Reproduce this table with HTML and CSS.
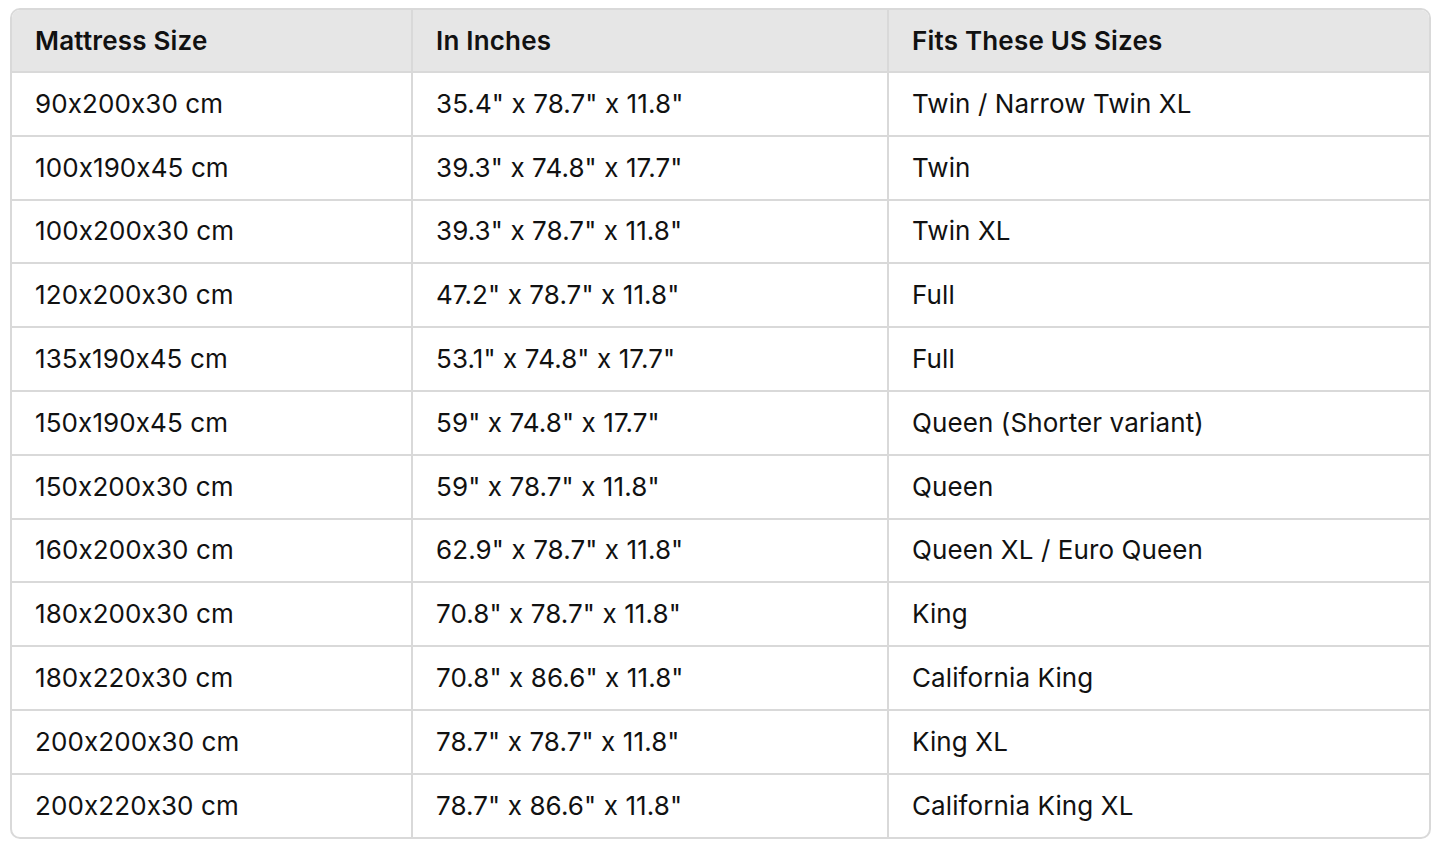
FILE: index.html
```html
<!DOCTYPE html>
<html>
<head>
<meta charset="utf-8">
<link rel="stylesheet" href="styles.css">
</head>
<body>
<div class="wrap">
<table class="sizes">
<colgroup><col class="c1"><col class="c2"><col class="c3"></colgroup>
<thead>
<tr><th>Mattress Size</th><th>In Inches</th><th>Fits These US Sizes</th></tr>
</thead>
<tbody>
<tr><td>90x200x30 cm</td><td>35.4" x 78.7" x 11.8"</td><td>Twin / Narrow Twin XL</td></tr>
<tr><td>100x190x45 cm</td><td>39.3" x 74.8" x 17.7"</td><td>Twin</td></tr>
<tr><td>100x200x30 cm</td><td>39.3" x 78.7" x 11.8"</td><td>Twin XL</td></tr>
<tr><td>120x200x30 cm</td><td>47.2" x 78.7" x 11.8"</td><td>Full</td></tr>
<tr><td>135x190x45 cm</td><td>53.1" x 74.8" x 17.7"</td><td>Full</td></tr>
<tr><td>150x190x45 cm</td><td>59" x 74.8" x 17.7"</td><td>Queen (Shorter variant)</td></tr>
<tr><td>150x200x30 cm</td><td>59" x 78.7" x 11.8"</td><td>Queen</td></tr>
<tr><td>160x200x30 cm</td><td>62.9" x 78.7" x 11.8"</td><td>Queen XL / Euro Queen</td></tr>
<tr><td>180x200x30 cm</td><td>70.8" x 78.7" x 11.8"</td><td>King</td></tr>
<tr><td>180x220x30 cm</td><td>70.8" x 86.6" x 11.8"</td><td>California King</td></tr>
<tr><td>200x200x30 cm</td><td>78.7" x 78.7" x 11.8"</td><td>King XL</td></tr>
<tr><td>200x220x30 cm</td><td>78.7" x 86.6" x 11.8"</td><td>California King XL</td></tr>
</tbody>
</table>
</div>
</body>
</html>
```
FILE: styles.css
```css
html, body {
  margin: 0;
  padding: 0;
  background: #ffffff;
}
body {
  padding: 8px 14px 0 10px;
  font-family: Inter, "Noto Sans", sans-serif;
  font-feature-settings: "calt" 0;
  color: #111111;
}
.wrap {
  border: 2px solid #d9d9d9;
  border-radius: 10px;
  overflow: hidden;
  width: 1417px;
}
.sizes {
  width: 100%;
  border-collapse: separate;
  border-spacing: 0;
  table-layout: fixed;
}
.c1 { width: 401px; }
.c2 { width: 476px; }
.c3 { width: auto; }
.sizes th, .sizes td {
  text-align: left;
  font-size: 26px;
  padding: 0 0 0 23px;
  border-right: 2px solid #d9d9d9;
  border-bottom: 2px solid #d9d9d9;
  box-sizing: border-box;
  line-height: 1;
}
.sizes th {
  font-weight: 600;
  background: #e6e6e6;
  height: 63px;
  letter-spacing: 0.2px;
}
.sizes td {
  height: 63.8px;
  font-weight: 400;
  letter-spacing: 0.1px;
}
.sizes tr > :last-child { border-right: none; }
.sizes tbody tr:last-child td { border-bottom: none; height: 61.8px; }
```
